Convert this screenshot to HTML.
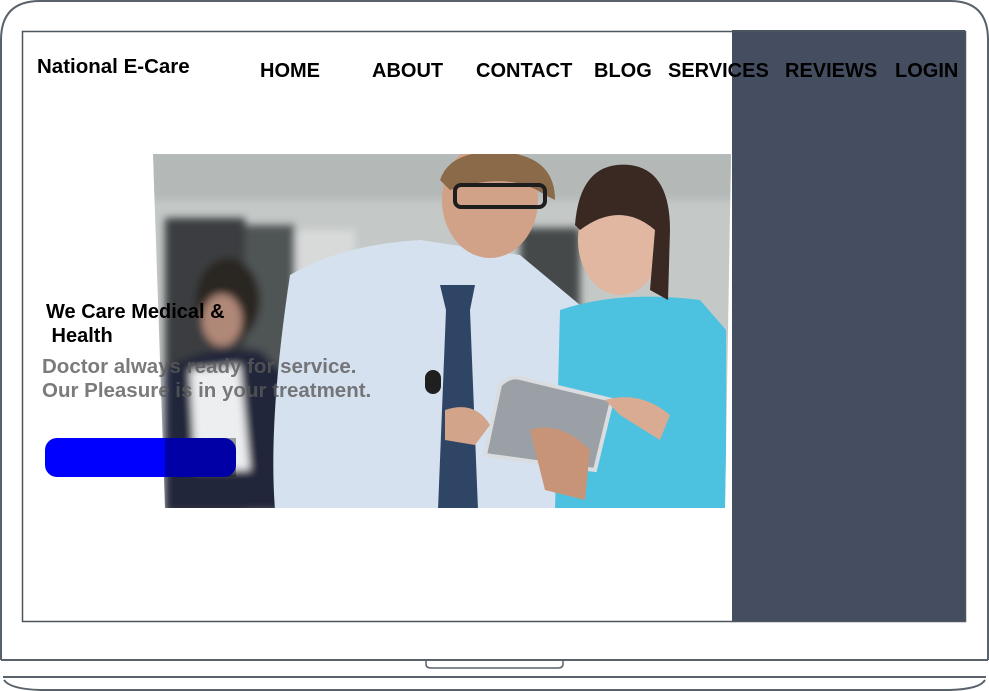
<!DOCTYPE html>
<html><head><style>
body{margin:0;width:989px;height:691px;background:#fff;position:relative;overflow:hidden;font-family:"Liberation Sans",sans-serif}
.a{position:absolute}
.nav{position:absolute;top:60px;font-weight:bold;font-size:20px;color:#000;white-space:nowrap}
</style></head><body>
<svg class="a" style="left:0;top:0" width="989" height="691">
<path d="M1,660 L1,40 Q1,1 40,1 L950,1 Q988,1 988,40 L988,660" fill="none" stroke="#59626b" stroke-width="2"/>
<line x1="1" y1="660" x2="988" y2="660" stroke="#59626b" stroke-width="2"/>
<path d="M426,661 L426,664 Q426,668 431,668 L558,668 Q563,668 563,664 L563,661" fill="none" stroke="#59626b" stroke-width="1.5"/>
<line x1="3" y1="677" x2="986" y2="677" stroke="#59626b" stroke-width="2"/>
<path d="M4,680 Q10,689 40,690 L950,690 Q980,689 985,680" fill="none" stroke="#59626b" stroke-width="2"/>
<rect x="732" y="30" width="233" height="592" fill="#454e60"/>
<rect x="22.5" y="31.5" width="943" height="590" fill="none" stroke="#4c555e" stroke-width="1.5"/>
<defs><clipPath id="c"><polygon points="153,154 731,154 725,508 165,508"/></clipPath>
<filter id="b"><feGaussianBlur stdDeviation="4"/></filter></defs>
<g clip-path="url(#c)">
<rect x="150" y="150" width="590" height="365" fill="#c4c8c7"/>
<g filter="url(#b)">
<rect x="150" y="150" width="590" height="50" fill="#b4b9b8"/>
<rect x="165" y="218" width="80" height="300" fill="#3b3e3f"/>
<rect x="245" y="225" width="50" height="290" fill="#505454"/>
<rect x="295" y="230" width="60" height="280" fill="#d8dada"/>
<rect x="520" y="228" width="60" height="120" fill="#444848"/>
<ellipse cx="228" cy="300" rx="32" ry="42" fill="#2c2624"/>
<ellipse cx="222" cy="320" rx="20" ry="26" fill="#b08878"/>
<path d="M165,370 Q200,345 260,350 L290,380 L295,510 L165,510Z" fill="#23283a"/>
<path d="M190,370 L240,365 L250,470 L195,470Z" fill="#eceef0"/>
</g>
<path d="M290,275 Q340,245 420,240 L520,255 L580,305 L600,510 L275,510 Q268,420 290,275Z" fill="#d6e1ef"/>
<path d="M440,285 L475,285 L470,310 L478,510 L438,510 L446,310Z" fill="#2f4566"/>
<ellipse cx="490" cy="200" rx="48" ry="58" fill="#d1a188"/>
<path d="M440,180 Q450,150 500,152 Q555,155 555,200 L545,195 Q510,170 450,190Z" fill="#8a6a48"/>
<rect x="455" y="185" width="90" height="22" rx="6" fill="none" stroke="#1e1e1e" stroke-width="4"/>
<path d="M560,310 Q620,290 700,300 L726,330 L726,510 L555,510Z" fill="#4cc2e0"/>
<ellipse cx="620" cy="240" rx="42" ry="55" fill="#e1b7a2"/>
<path d="M575,225 Q580,160 630,165 Q670,170 670,230 L668,300 L650,290 L655,230 Q620,200 580,230Z" fill="#3a2822"/>
<path d="M485,455 L500,385 Q510,375 520,378 L612,400 L595,470 Z" fill="#9aa0a6" stroke="#d9dde0" stroke-width="4"/>
<path d="M530,430 Q560,420 590,450 L585,500 L545,490Z" fill="#c89478"/>
<path d="M445,410 Q475,400 490,425 L475,445 L445,440Z" fill="#d2a48a"/>
<path d="M605,400 Q640,390 670,415 L660,440 L620,415Z" fill="#d9ab92"/>
<rect x="425" y="370" width="16" height="24" rx="8" fill="#1f1f1f"/>
</g>
<rect x="45" y="438" width="191" height="39" rx="12" fill="#0000ff"/>
<rect x="165" y="438" width="71" height="39" fill="#000" opacity="0.35" clip-path="url(#c)"/>
</svg>
<div class="a" style="left:37px;top:55px;font-weight:bold;font-size:20.5px">National E-Care</div>
<div class="nav" style="left:260px">HOME</div>
<div class="nav" style="left:372px">ABOUT</div>
<div class="nav" style="left:476px">CONTACT</div>
<div class="nav" style="left:594px">BLOG</div>
<div class="nav" style="left:668px">SERVICES</div>
<div class="nav" style="left:785px">REVIEWS</div>
<div class="nav" style="left:895px">LOGIN</div>
<div class="a" style="left:46px;top:300px;font-weight:bold;font-size:20px;line-height:24px">We Care Medical &amp;<br>&nbsp;Health</div>
<div class="a" style="left:42px;top:355px;font-weight:bold;font-size:20.5px;line-height:24px;color:rgba(90,90,90,0.8)">Doctor always ready for service.<br>Our Pleasure is in your treatment.</div>
</body></html>
